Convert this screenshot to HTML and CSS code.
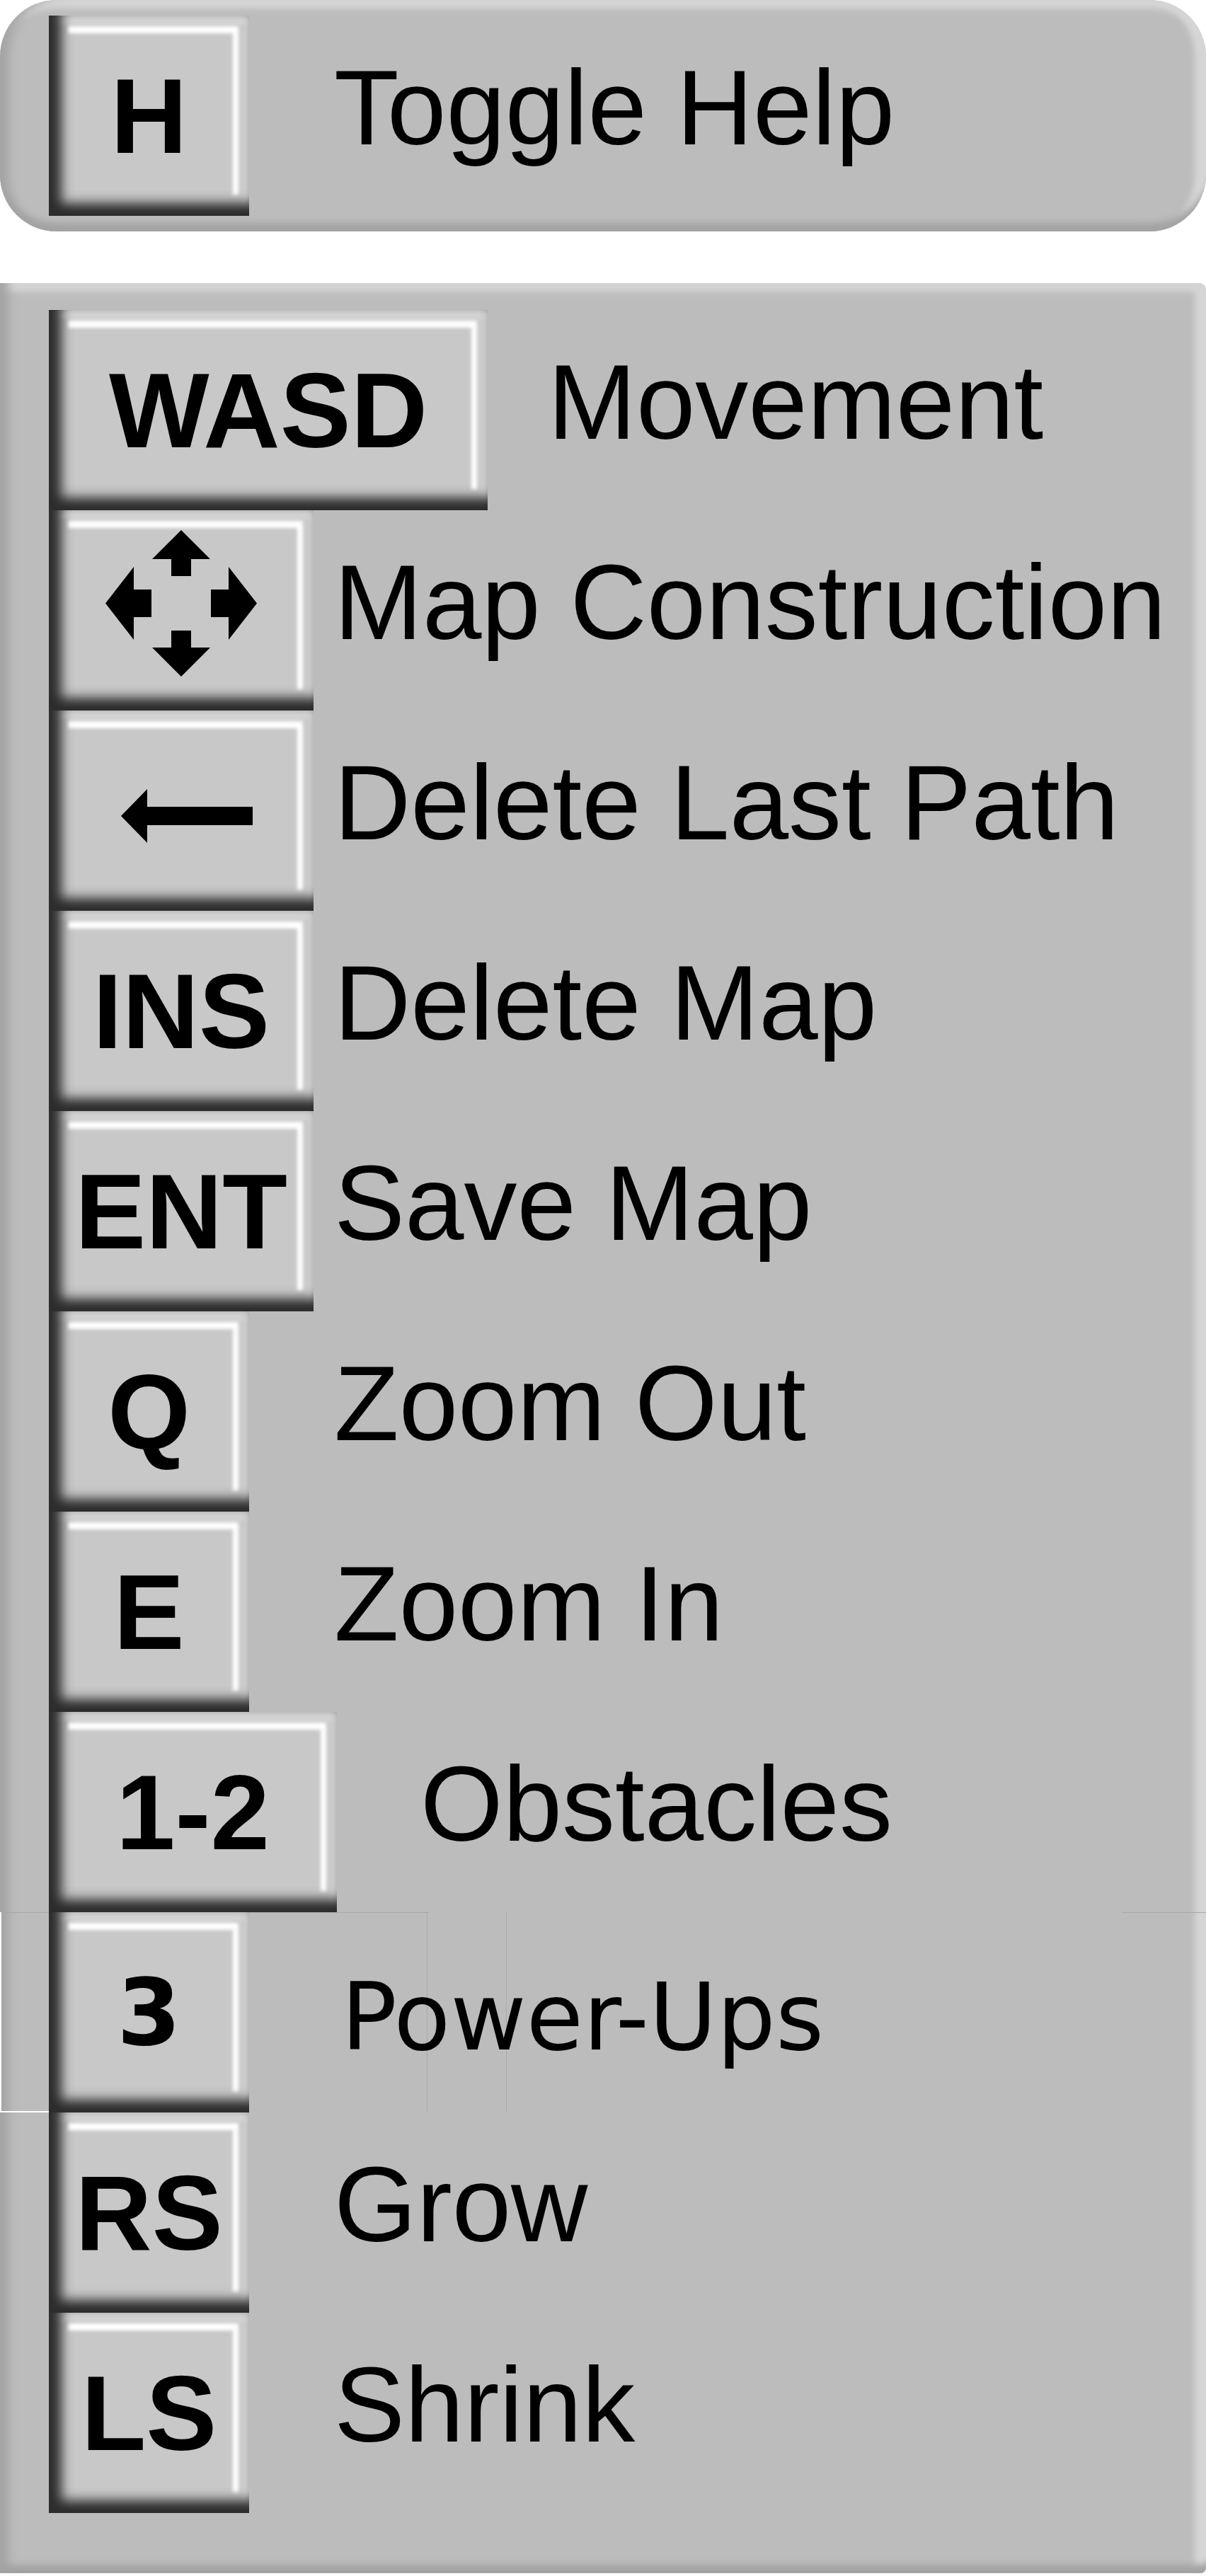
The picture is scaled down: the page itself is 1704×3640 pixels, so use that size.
FILE: index.html
```html
<!DOCTYPE html>
<html lang="en">
<head>
<meta charset="utf-8">
<title>Help</title>
<link rel="stylesheet" href="styles.css">
</head>
<body>
<main class="help">
  <section class="panel panel--toggle">
    <div class="row row--toggle">
      <div class="key key--sq">H</div>
      <span class="label label--sq">Toggle Help</span>
    </div>
  </section>

  <section class="panel panel--list">
    <div class="row">
      <div class="key key--wide">WASD</div>
      <span class="label label--wide">Movement</span>
    </div>
    <div class="row">
      <div class="key key--mid">
        <svg class="icon icon--move" width="214" height="207" viewBox="0 0 214 207" aria-hidden="true">
          <polygon points="107,0 148,41 121,41 121,65 93,65 93,41 66,41"/>
          <polygon points="107,207 148,166 121,166 121,142 93,142 93,166 66,166"/>
          <polygon points="0,103.5 40,52 40,84 65,84 65,123 40,123 40,155"/>
          <polygon points="214,103.5 174,52 174,84 149,84 149,123 174,123 174,155"/>
        </svg>
      </div>
      <span class="label label--mid">Map Construction</span>
    </div>
    <div class="row">
      <div class="key key--mid">
        <svg class="icon icon--back" width="186" height="76" viewBox="0 0 186 76" aria-hidden="true">
          <polygon points="0,38 37,0 37,25 186,25 186,51 37,51 37,76"/>
        </svg>
      </div>
      <span class="label label--mid">Delete Last Path</span>
    </div>
    <div class="row">
      <div class="key key--mid">INS</div>
      <span class="label label--mid">Delete Map</span>
    </div>
    <div class="row">
      <div class="key key--mid">ENT</div>
      <span class="label label--mid">Save Map</span>
    </div>
    <div class="row">
      <div class="key key--sq">Q</div>
      <span class="label label--sq">Zoom Out</span>
    </div>
    <div class="row">
      <div class="key key--sq">E</div>
      <span class="label label--sq">Zoom In</span>
    </div>
    <div class="row">
      <div class="key key--num">1-2</div>
      <span class="label label--num">Obstacles</span>
    </div>
    <div class="row row--odd">
      <div class="key key--sq key--dv">3</div>
      <span class="label label--dv">Power-Ups</span>
    </div>
    <div class="row">
      <div class="key key--sq">RS</div>
      <span class="label label--sq">Grow</span>
    </div>
    <div class="row">
      <div class="key key--sq">LS</div>
      <span class="label label--sq">Shrink</span>
    </div>
  </section>
</main>
</body>
</html>
```

FILE: styles.css
```css
html, body {
  margin: 0;
  padding: 0;
  background: #ffffff;
}

.help {
  width: 1704px;
  display: flex;
  flex-direction: column;
  gap: 73px;
}

.panel {
  background: #bcbcbc;
  box-shadow:
    inset 22px 0 14px -10px #a4a4a4,
    inset 0 -22px 10px -10px #a3a3a3,
    inset 0 20px 8px -8px #d5d5d5,
    inset -24px 0 8px -8px #d6d6d6;
}

.panel--toggle {
  height: 327px;
  border-radius: 80px;
  display: flex;
  align-items: center;
}

.panel--list {
  height: 3236px;
  box-sizing: border-box;
  padding: 38px 0 85px;
  border-radius: 0 10px 8px 0;
}

.row {
  height: 283px;
  padding-left: 69px;
  display: flex;
  align-items: center;
}

.row--toggle {
  width: 100%;
}

/* odd leftover lines in the Power-Ups row */
.row--odd {
  padding-left: 67px;
  border-left: 2px solid #ffffff;
  background:
    linear-gradient(#a7a7a7, #a7a7a7) 0 0 / 604px 1px no-repeat,
    linear-gradient(#a7a7a7, #a7a7a7) 1583px 0 / 121px 1px no-repeat,
    linear-gradient(#ababab, #ababab) 601px 0 / 1px 100% no-repeat,
    linear-gradient(#ababab, #ababab) 713px 0 / 1px 100% no-repeat,
    linear-gradient(#ffffff, #ffffff) 0 100% / 67px 2px no-repeat;
}

.key {
  position: relative;
  flex: none;
  height: 283px;
  box-sizing: border-box;
  background: #c8c8c8;
  display: flex;
  align-items: center;
  justify-content: center;
  font: 700 150px/1 "Liberation Sans", Arial, sans-serif;
  color: #000;
  box-shadow:
    inset 26px 0 16px -8px #2d2d2d,
    inset 0 -26px 16px -8px #2d2d2d,
    inset 0 13px 5px -1px #d6d6d6,
    inset -11px 0 5px -1px #d0d0d0;
}

.key::before {
  content: "";
  position: absolute;
  top: 15px;
  right: 15px;
  left: 28px;
  bottom: 30px;
  border-top: 10px solid #ffffff;
  border-right: 8px solid #ffffff;
  filter: blur(2.5px);
  pointer-events: none;
}

.key--sq { width: 283px; }
.key--mid { width: 374px; }
.key--wide { width: 620px; }
.key--num { width: 407px; }

.key--dv {
  font-family: "DejaVu Sans", Verdana, sans-serif;
  font-size: 130px;
}

.icon {
  position: relative;
  display: block;
  fill: #000;
}

.icon--move { margin-bottom: 21px; }
.icon--back { margin: 15px 0 0 16px; }

.label {
  font: 400 150px/1.15 "Liberation Sans", Arial, sans-serif;
  color: #000;
  white-space: nowrap;
  padding-bottom: 22px;
}

.label--sq { margin-left: 120px; }
.label--mid { margin-left: 29px; }
.label--wide { margin-left: 85px; }
.label--num { margin-left: 118px; }

.label--dv {
  margin-left: 130px;
  font-family: "DejaVu Sans", Verdana, sans-serif;
  font-size: 131px;
  padding-bottom: 0;
  padding-top: 15px;
}
```
